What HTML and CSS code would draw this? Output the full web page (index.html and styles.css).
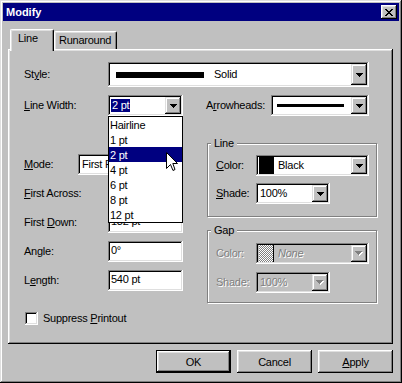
FILE: index.html
```html
<!DOCTYPE html>
<html lang="en">
<head>
  <meta charset="UTF-8" />
  <title>Modify</title>
  <link rel="stylesheet" href="styles.css">
</head>
<body>
  <div class="window">
    <div class="titlebar">
      <span class="title">Modify</span>
      <span class="close">
        <svg width="8" height="7" viewBox="0 0 8 7" shape-rendering="crispEdges"><path d="M0 0h2v1H0zM6 0h2v1H6zM1 1h2v1H1zM5 1h2v1H5zM2 2h4v1H2zM3 3h2v1H3zM2 4h4v1H2zM1 5h2v1H1zM5 5h2v1H5zM0 6h2v1H0zM6 6h2v1H6z"/></svg>
      </span>
    </div>

    <div class="dialog">
      <div class="tabs">
        <div class="tab active">Line</div>
        <div class="tab other">Runaround</div>
      </div>

      <div class="panel">
        <div class="row style-row">
          <span class="lbl">St<u>y</u>le:</span>
          <div class="combo tall w-style">
            <span class="val"><span class="thick"></span>Solid</span>
            <span class="drop"><svg width="7" height="4" viewBox="0 0 7 4" shape-rendering="crispEdges"><path d="M0 0h7v1H0zM1 1h5v1H1zM2 2h3v1H2zM3 3h1v1H3z"/></svg></span>
          </div>
        </div>

        <div class="cols">
          <div class="col left">
            <div class="row">
              <span class="lbl"><u>L</u>ine Width:</span>
              <div class="combo w75">
                <span class="val"><span class="hilite">2 pt</span></span>
                <span class="drop"><svg width="7" height="4" viewBox="0 0 7 4" shape-rendering="crispEdges"><path d="M0 0h7v1H0zM1 1h5v1H1zM2 2h3v1H2zM3 3h1v1H3z"/></svg></span>
              </div>
            </div>

            <div class="stack">
              <div class="row">
                <span class="lbl short"><u>M</u>ode:</span>
                <div class="combo w105">
                  <span class="val">First Point</span>
                  <span class="drop"><svg width="7" height="4" viewBox="0 0 7 4" shape-rendering="crispEdges"><path d="M0 0h7v1H0zM1 1h5v1H1zM2 2h3v1H2zM3 3h1v1H3z"/></svg></span>
                </div>
              </div>
              <div class="row">
                <span class="lbl"><u>F</u>irst Across:</span>
                <div class="field w75"></div>
              </div>
              <div class="row">
                <span class="lbl">First <u>D</u>own:</span>
                <div class="field w75">132 pt</div>
              </div>
              <div class="row">
                <span class="lbl">Angle:</span>
                <div class="field w75">0°</div>
              </div>
              <div class="row">
                <span class="lbl">L<u>e</u>ngth:</span>
                <div class="field w75">540 pt</div>
              </div>
            </div>

            <div class="check-row">
              <span class="check"></span>
              <span>Suppress <u>P</u>rintout</span>
            </div>
          </div>

          <div class="col right">
            <div class="row">
              <span class="lbl arrow-lbl">A<u>r</u>rowheads:</span>
              <div class="combo w98">
                <span class="val"><span class="thin"></span></span>
                <span class="drop"><svg width="7" height="4" viewBox="0 0 7 4" shape-rendering="crispEdges"><path d="M0 0h7v1H0zM1 1h5v1H1zM2 2h3v1H2zM3 3h1v1H3z"/></svg></span>
              </div>
            </div>

            <div class="group line-group">
              <span class="group-title">Line</span>
              <div class="row first">
                <span class="lbl glbl"><u>C</u>olor:</span>
                <div class="combo w113">
                  <span class="val"><span class="swatch black"></span>Black</span>
                  <span class="drop"><svg width="7" height="4" viewBox="0 0 7 4" shape-rendering="crispEdges"><path d="M0 0h7v1H0zM1 1h5v1H1zM2 2h3v1H2zM3 3h1v1H3z"/></svg></span>
                </div>
              </div>
              <div class="row next">
                <span class="lbl glbl"><u>S</u>hade:</span>
                <div class="combo w74">
                  <span class="val">100%</span>
                  <span class="drop"><svg width="7" height="4" viewBox="0 0 7 4" shape-rendering="crispEdges"><path d="M0 0h7v1H0zM1 1h5v1H1zM2 2h3v1H2zM3 3h1v1H3z"/></svg></span>
                </div>
              </div>
            </div>

            <div class="group gap-group">
              <span class="group-title">Gap</span>
              <div class="row first">
                <span class="lbl glbl off">Color:</span>
                <div class="combo w113 disabled">
                  <span class="val"><span class="swatch dither"></span><i class="off">None</i></span>
                  <span class="drop"><svg width="8" height="5" viewBox="0 0 8 5" shape-rendering="crispEdges"><path fill="#fff" d="M1 1h7v1H1zM2 2h5v1H2zM3 3h3v1H3zM4 4h1v1H4z"/><path fill="#808080" d="M0 0h7v1H0zM1 1h5v1H1zM2 2h3v1H2zM3 3h1v1H3z"/></svg></span>
                </div>
              </div>
              <div class="row next">
                <span class="lbl glbl off">Shade:</span>
                <div class="combo w74 disabled">
                  <span class="val off">100%</span>
                  <span class="drop"><svg width="8" height="5" viewBox="0 0 8 5" shape-rendering="crispEdges"><path fill="#fff" d="M1 1h7v1H1zM2 2h5v1H2zM3 3h3v1H3zM4 4h1v1H4z"/><path fill="#808080" d="M0 0h7v1H0zM1 1h5v1H1zM2 2h3v1H2zM3 3h1v1H3z"/></svg></span>
                </div>
              </div>
            </div>
          </div>
        </div>

        <!-- open drop-down of Line Width -->
        <ul class="list">
          <li>Hairline</li>
          <li>1 pt</li>
          <li class="sel">2 pt</li>
          <li>4 pt</li>
          <li>6 pt</li>
          <li>8 pt</li>
          <li>12 pt</li>
        </ul>

        <svg class="cursor" width="12" height="19" viewBox="0 0 12 19"><path d="M0.5 0.5V16.5L4.5 12.5L7 18.5L9 17.5L6.8 11.5H11.5Z" fill="#fff" stroke="#000"/></svg>
      </div>

      <div class="buttons">
        <button class="btn default">OK</button>
        <button class="btn">Cancel</button>
        <button class="btn"><u>A</u>pply</button>
      </div>
    </div>
  </div>
</body>
</html>
```

FILE: styles.css
```css
body {
  margin: 0;
  font-family: "Liberation Sans", Arial, sans-serif;
  font-size: 11px;
  letter-spacing: -0.25px;
  color: #000;
}
.window {
  width: 402px;
  height: 383px;
  box-sizing: border-box;
  padding: 3px;
  background: #c0c0c0;
  box-shadow: inset -1px -1px #000, inset 1px 1px #dfdfdf, inset -2px -2px #808080, inset 2px 2px #fff;
}
.titlebar {
  height: 18px;
  background: #000080;
  display: flex;
  align-items: center;
  justify-content: space-between;
  padding: 0 2px 0 3px;
}
.title {
  color: #fff;
  font-weight: bold;
  line-height: 13px;
  letter-spacing: 0;
}
.close {
  width: 16px;
  height: 14px;
  box-sizing: border-box;
  background: #c0c0c0;
  display: flex;
  align-items: center;
  justify-content: center;
  box-shadow: inset -1px -1px #000, inset 1px 1px #fff, inset -2px -2px #808080, inset 2px 2px #dfdfdf;
}
.dialog {
  padding: 8px 6px 0 5px;
}

/* tabs */
.tabs {
  display: flex;
  align-items: flex-end;
  height: 20px;
  padding-left: 2px;
}
.tab {
  box-sizing: border-box;
  height: 18px;
  padding-top: 2px;
  line-height: 13px;
  background: #c0c0c0;
  border-top: 1px solid #fff;
  border-left: 1px solid #fff;
  border-right: 1px solid #000;
  border-radius: 2px 2px 0 0;
  box-shadow: inset -1px 0 #808080, inset 1px 1px #dfdfdf;
}
.tab.active {
  position: relative;
  z-index: 1;
  width: 44px;
  height: 22px;
  margin-bottom: -2px;
  padding-left: 7px;
}
.tab.other {
  width: 63px;
  padding-left: 4px;
}

.panel {
  position: relative;
  height: 295px;
  box-sizing: border-box;
  padding: 13px 0 0 16px;
  box-shadow: inset -1px -1px #000, inset 1px 1px #fff, inset -2px -2px #808080, inset 2px 2px #dfdfdf;
}

.row {
  display: flex;
  align-items: center;
  height: 21px;
}
.style-row {
  height: 25px;
}
.lbl {
  width: 84px;
  line-height: 13px;
  flex-shrink: 0;
}
.lbl.short { width: 54px; }
.lbl.arrow-lbl { width: 65px; }
.lbl.glbl { width: 40px; }

.cols {
  display: flex;
  margin-top: 8px;
}
.col.left {
  width: 182px;
}
.col.right {
  width: 175px;
}
.stack {
  display: flex;
  flex-direction: column;
  gap: 8px;
  margin-top: 38px;
}

/* combo boxes and edit fields */
.combo, .field {
  display: flex;
  align-items: center;
  height: 21px;
  box-sizing: border-box;
  padding: 2px;
  background: #fff;
  box-shadow: inset -1px -1px #fff, inset 1px 1px #808080, inset -2px -2px #dfdfdf, inset 2px 2px #000;
}
.combo.tall { height: 25px; }
.combo.disabled { background: #c0c0c0; }
.field {
  align-items: flex-start;
  padding: 3px 2px 2px 3px;
  line-height: 13px;
}
.w-style { width: 261px; }
.w75 { width: 75px; }
.w74 { width: 74px; }
.w98 { width: 98px; }
.w105 { width: 105px; }
.w113 { width: 113px; }

.val {
  flex: 1;
  display: flex;
  align-items: center;
  line-height: 13px;
  padding-left: 2px;
  overflow: hidden;
  white-space: nowrap;
}
.hilite {
  margin-left: -1px;
  padding: 0 1px;
  background: #000080;
  color: #fff;
}
.drop {
  align-self: stretch;
  width: 16px;
  flex-shrink: 0;
  background: #c0c0c0;
  display: flex;
  align-items: center;
  justify-content: center;
  box-shadow: inset -1px -1px #000, inset 1px 1px #dfdfdf, inset -2px -2px #808080, inset 2px 2px #fff;
}
.thick {
  width: 88px;
  height: 6px;
  margin: 0 10px 0 4px;
  background: #000;
}
.thin {
  width: 67px;
  height: 3px;
  margin-left: 2px;
  background: #000;
}
.swatch {
  width: 15px;
  height: 17px;
  box-sizing: border-box;
  margin: 0 4px 0 -1px;
}
.swatch.black { background: #000; }
.swatch.dither {
  border-right: 1px solid #000;
  background: repeating-conic-gradient(#808080 0 25%, #fff 0 50%) 0 0 / 2px 2px;
}
.off {
  color: #808080;
  text-shadow: 1px 1px #fff;
}

/* group boxes */
.group {
  margin-left: 1px;
  width: 170px;
  box-sizing: border-box;
  border: 1px solid #808080;
  box-shadow: inset 1px 1px #fff, 1px 1px #fff;
  padding: 0 0 12px 8px;
}
.group-title {
  display: block;
  width: max-content;
  margin: -7px 0 0 -5px;
  padding: 0 3px;
  line-height: 13px;
  background: #c0c0c0;
}
.line-group { margin-top: 27px; }
.line-group .row.first { margin-top: 5px; }
.line-group .row.next { margin-top: 7px; }
.gap-group {
  margin-top: 13px;
  padding-bottom: 9px;
}
.gap-group .row.first { margin-top: 6px; }
.gap-group .row.next { margin-top: 8px; }

/* checkbox */
.check-row {
  display: flex;
  align-items: center;
  gap: 5px;
  height: 13px;
  margin-top: 21px;
  line-height: 13px;
}
.check {
  width: 13px;
  height: 13px;
  margin-left: 1px;
  box-sizing: border-box;
  background: #fff;
  box-shadow: inset -1px -1px #fff, inset 1px 1px #808080, inset -2px -2px #dfdfdf, inset 2px 2px #000;
}

/* dropped list */
.list {
  position: absolute;
  left: 100px;
  top: 67px;
  width: 75px;
  height: 107px;
  box-sizing: border-box;
  margin: 0;
  padding: 0;
  list-style: none;
  border: 1px solid #000;
  background: #fff;
}
.list li {
  height: 15px;
  box-sizing: border-box;
  padding: 2px 0 0 1px;
  line-height: 13px;
}
.list li.sel {
  background: #000080;
  color: #fff;
}
.cursor {
  position: absolute;
  left: 158px;
  top: 103px;
}

/* buttons */
.buttons {
  display: flex;
  justify-content: flex-end;
  gap: 6px;
  margin-top: 6px;
}
.btn {
  width: 75px;
  height: 23px;
  border: none;
  padding: 0;
  background: #c0c0c0;
  font: inherit;
  letter-spacing: inherit;
  color: inherit;
  box-shadow: inset -1px -1px #000, inset 1px 1px #fff, inset -2px -2px #808080, inset 2px 2px #dfdfdf;
}
.btn.default {
  box-shadow: inset -2px -2px #000, inset 1px 1px #000, inset 2px 2px #fff, inset -3px -3px #808080, inset 3px 3px #dfdfdf;
}
```
